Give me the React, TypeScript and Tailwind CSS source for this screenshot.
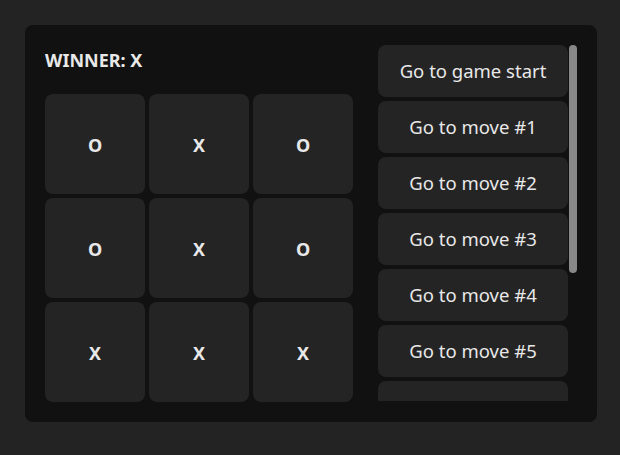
const board = ["O", "X", "O", "O", "X", "O", "X", "X", "X"];

const moves = Array.from({ length: 10 }, (_, i) =>
  i === 0 ? "Go to game start" : `Go to move #${i}`
);

export default function App() {
  return (
    <div className="min-h-screen bg-[#232323] p-[25px] font-['Noto_Sans',sans-serif] text-[#e8e8e8]">
      <div className="flex w-[572px] h-[397px] gap-[25px] rounded-lg bg-[#111111] p-5">
        <div className="flex flex-col">
          <div className="h-[50px] pt-[3px] text-[18px] font-bold leading-[24px]">WINNER: X</div>
          <div className="grid grid-cols-[repeat(3,100px)] grid-rows-[repeat(3,100px)] gap-1">
            {board.map((v, i) => (
              <button
                key={i}
                className="flex items-center justify-center rounded-lg bg-[#242424] pt-[2px] text-[18px] font-bold"
              >
                {v}
              </button>
            ))}
          </div>
        </div>
        <div className="flex h-[356px] flex-1 gap-px">
          <div className="flex flex-1 flex-col gap-1 overflow-hidden">
            {moves.map((m) => (
              <button
                key={m}
                className="h-[52px] w-full shrink-0 rounded-lg bg-[#242424] text-[18.5px]"
              >
                {m}
              </button>
            ))}
          </div>
          <div className="w-2">
            <div className="h-[228px] rounded-full bg-[#888888]" />
          </div>
        </div>
      </div>
    </div>
  );
}
